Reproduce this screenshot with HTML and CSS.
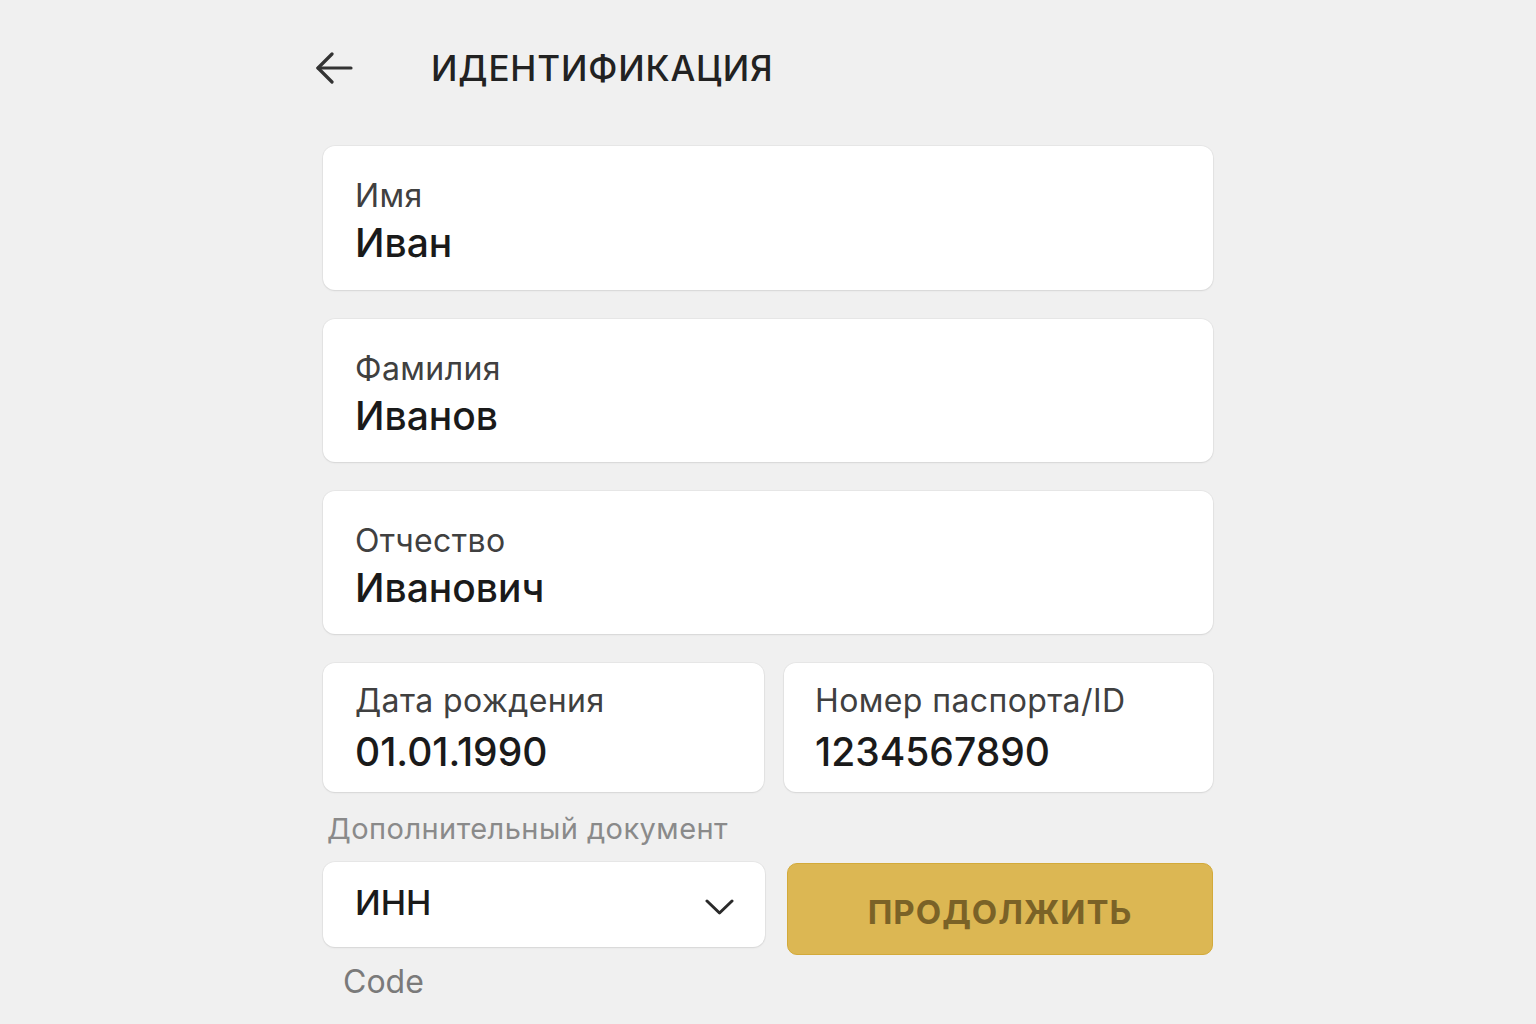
FILE: index.html
```html
<!DOCTYPE html>
<html lang="ru">
<head>
<meta charset="utf-8">
<title>Идентификация</title>
<link rel="stylesheet" href="styles.css">
</head>
<body>
<main class="page">
  <header class="header">
    <button class="back" aria-label="Назад">
      <svg width="40" height="32" viewBox="0 0 40 32" fill="none" stroke="#333" stroke-width="3.2" stroke-linecap="round" stroke-linejoin="round">
        <path d="M36 16H3"/>
        <path d="M17 2L3 16L17 30"/>
      </svg>
    </button>
    <h1 class="title">ИДЕНТИФИКАЦИЯ</h1>
  </header>

  <section class="form">
    <div class="card card-wide">
      <div class="label">Имя</div>
      <div class="value">Иван</div>
    </div>
    <div class="card card-wide">
      <div class="label">Фамилия</div>
      <div class="value">Иванов</div>
    </div>
    <div class="card card-wide">
      <div class="label">Отчество</div>
      <div class="value">Иванович</div>
    </div>
    <div class="row">
      <div class="card card-small card-date">
        <div class="label">Дата рождения</div>
        <div class="value">01.01.1990</div>
      </div>
      <div class="card card-small card-id">
        <div class="label">Номер паспорта/ID</div>
        <div class="value">1234567890</div>
      </div>
    </div>
    <div class="extra-label">Дополнительный документ</div>
    <div class="row row-actions">
      <div class="col-select">
        <div class="select">
          <span class="select-text">ИНН</span>
          <svg class="chevron" width="30" height="18" viewBox="0 0 30 18" fill="none" stroke="#2a2a2a" stroke-width="3" stroke-linecap="round" stroke-linejoin="round">
            <path d="M2 3L14.5 15L27 3"/>
          </svg>
        </div>
        <div class="code">Code</div>
      </div>
      <button class="continue">ПРОДОЛЖИТЬ</button>
    </div>
  </section>
</main>
</body>
</html>
```

FILE: styles.css
```css
html, body {
  margin: 0;
  padding: 0;
  background: #f0f0f0;
}

body {
  font-family: Inter, "Noto Sans", "DejaVu Sans", sans-serif;
  color: #1c1c1c;
  height: 1024px;
  overflow: hidden;
}

.page {
  width: 890px;
  margin-left: 323px;
}

.header {
  display: flex;
  align-items: center;
  height: 56px;
  margin-top: 40px;
}

.back {
  border: none;
  background: none;
  padding: 0;
  margin-left: -8px;
  width: 40px;
  height: 32px;
  display: flex;
  align-items: center;
  cursor: pointer;
}

.title {
  margin: 0 0 0 76px;
  font-size: 35px;
  font-weight: 500;
  letter-spacing: 0.85px;
  color: #222;
  line-height: 56px;
}

.form {
  margin-top: 50px;
  display: flex;
  flex-direction: column;
}

.card {
  background: #fff;
  border-radius: 12px;
  box-shadow: 0 0 0 1px rgba(0,0,0,0.035), 0 1px 2px rgba(0,0,0,0.08);
  box-sizing: border-box;
  padding-left: 32px;
}

.card-wide {
  height: 144px;
  padding-top: 30px;
  margin-bottom: 29px;
}

.card-wide + .card-wide {
  height: 143px;
}

.label {
  font-size: 32px;
  line-height: 40px;
  color: #404040;
  font-weight: 400;
  letter-spacing: 0.4px;
}

.value {
  font-size: 39px;
  line-height: 48px;
  margin-top: 3px;
  font-weight: 500;
  color: #1a1a1a;
}

.row {
  display: flex;
  justify-content: space-between;
}

.card-small {
  height: 129px;
  padding-top: 18px;
}

.card-small .value {
  margin-top: 7px;
}

.card-date {
  width: 441px;
}

.card-id {
  width: 429px;
  padding-left: 31px;
}

.extra-label {
  margin-top: 19px;
  padding-left: 4px;
  font-size: 29px;
  line-height: 36px;
  color: #8a8a8a;
  letter-spacing: 0.45px;
}

.row-actions {
  margin-top: 15px;
  align-items: flex-start;
}

.col-select {
  width: 442px;
}

.select {
  height: 85px;
  background: #fff;
  border-radius: 12px;
  box-shadow: 0 0 0 1px rgba(0,0,0,0.035), 0 1px 2px rgba(0,0,0,0.08);
  display: flex;
  align-items: center;
  justify-content: space-between;
  padding: 0 30px 0 32px;
  box-sizing: border-box;
}

.select-text {
  font-size: 34px;
  font-weight: 500;
  color: #1a1a1a;
  line-height: 40px;
  margin-top: -3px;
}

.chevron {
  margin-top: 4px;
}

.code {
  margin-top: 16px;
  padding-left: 20px;
  font-size: 32px;
  line-height: 37px;
  color: #7a7a7a;
}

.continue {
  width: 426px;
  height: 92px;
  margin-top: 1px;
  background: #dcb753;
  border: 1.5px solid #d3aa3a;
  border-radius: 10px;
  font-family: Inter, "Noto Sans", sans-serif;
  font-size: 33px;
  font-weight: 700;
  letter-spacing: 1.0px;
  color: #7a6227;
  padding-top: 7px;
  cursor: pointer;
}
```
